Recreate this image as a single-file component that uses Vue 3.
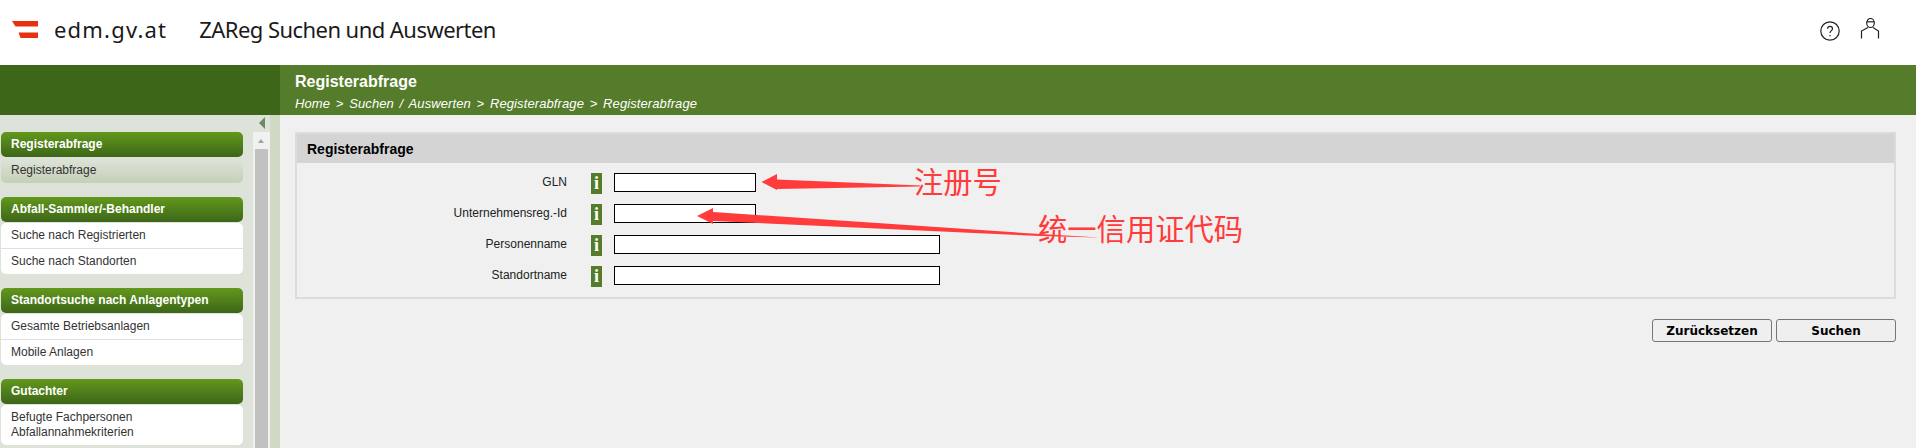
<script setup>
const menu = [
  { title: 'Registerabfrage', active: true, items: ['Registerabfrage'] },
  { title: 'Abfall-Sammler/-Behandler', items: ['Suche nach Registrierten', 'Suche nach Standorten'] },
  { title: 'Standortsuche nach Anlagentypen', items: ['Gesamte Betriebsanlagen', 'Mobile Anlagen'] },
  { title: 'Gutachter', items: ['Befugte Fachpersonen Abfallannahmekriterien'] }
]

const fields = [
  { label: 'GLN', short: true },
  { label: 'Unternehmensreg.-Id', short: true },
  { label: 'Personenname' },
  { label: 'Standortname' }
]
</script>

<template>
  <div class="page">
    <header class="top">
      <svg class="flag" width="26" height="17" viewBox="0 0 26 17">
        <path d="M0 0H26V5.500H3.500Z M6.500 11.500H26V17H8.500Z" fill="#e6320f" />
      </svg>
      <span class="brand">edm.gv.at</span>
      <span class="app-title">ZAReg Suchen und Auswerten</span>
      <div class="top-icons">
        <svg class="icon-help" width="20" height="20" viewBox="0 0 20 20" fill="none" stroke="#222" stroke-width="1.200">
          <circle cx="10" cy="10" r="9.200" />
          <path d="M7.500 7.800C7.500 6.200 8.700 5.300 10 5.300S12.500 6.200 12.500 7.700C12.500 9.500 10 9.800 10 12" />
          <path d="M10 14V15.200" />
        </svg>
        <svg width="20" height="21" viewBox="0 0 20 21" fill="none" stroke="#222" stroke-width="1.200">
          <ellipse cx="10.500" cy="5" rx="3.800" ry="4.500" />
          <path d="M6.800 3.800H14.200" />
          <path d="M8 9.500L1.500 13V20.500 M13 9.500L18.500 13V20.500" />
        </svg>
      </div>
    </header>

    <div class="green-bar">
      <div class="green-left"></div>
      <div class="green-right">
        <div class="page-title">Registerabfrage</div>
        <div class="crumbs">Home &gt; Suchen / Auswerten &gt; Registerabfrage &gt; Registerabfrage</div>
      </div>
    </div>

    <div class="body">
      <aside class="side">
        <nav class="menu">
          <section v-for="group in menu" :key="group.title" class="group">
            <div class="group-head">{{ group.title }}</div>
            <ul class="group-items" :class="{ 'is-active': group.active }">
              <li v-for="item in group.items" :key="item">{{ item }}</li>
            </ul>
          </section>
        </nav>
        <div class="scroll">
          <span class="scroll-up"></span>
          <div class="scroll-thumb"></div>
        </div>
        <div class="strip"></div>
        <span class="collapse"></span>
      </aside>

      <main class="content">
        <section class="panel">
          <h2 class="panel-head">Registerabfrage</h2>
          <div class="rows">
            <div v-for="field in fields" :key="field.label" class="row">
              <label class="row-label">{{ field.label }}</label>
              <span class="info">i</span>
              <input class="row-input" :class="{ short: field.short }" type="text" />
            </div>
          </div>
        </section>
        <div class="actions">
          <button class="btn">Zurücksetzen</button>
          <button class="btn">Suchen</button>
        </div>
      </main>
    </div>

    <!-- annotations pasted over the screenshot -->
    <svg class="arrows" width="1916" height="448" viewBox="0 0 1916 448">
      <path d="M761.500 182L777 174V179.500L920 185.500V186.500L777 189V190Z" fill="#ff3b3b" />
      <path d="M697 216L713 208V212L1040 234L1100 237.500L1040 236L713 221V224Z" fill="#ff3b3b" />
    </svg>
    <span class="note note-a">注册号</span>
    <span class="note note-b">统一信用证代码</span>
  </div>
</template>

<style scoped>
.page {
  position: relative;
  width: 1916px;
  height: 448px;
  overflow: hidden;
  background: #f0f0f0;
  font-family: "Liberation Sans", Arial, sans-serif;
}

/* 顶部 */
.top {
  display: flex;
  align-items: center;
  box-sizing: border-box;
  height: 65px;
  padding: 0 0 6px 12px;
  background: #fff;
  font-family: "Noto Sans", sans-serif;
  color: #1a1a1a;
}
.brand { margin: 0 0 2px 16px; font-size: 22px; letter-spacing: 1.2px; }
.app-title { margin: 0 0 2px 32px; font-size: 22px; letter-spacing: -0.55px; }
.top-icons {
  display: flex;
  align-items: flex-start;
  gap: 20px;
  align-self: flex-start;
  margin: 18px 36px 0 auto;
}
.icon-help { margin-top: 3px; }

.green-bar { display: flex; height: 50px; }
.green-left { width: 280px; background: #3d6619; }
.green-right {
  flex: 1;
  padding: 7px 0 0 15px;
  background: #557c2a;
  color: #fff;
}
.page-title { font-size: 16px; font-weight: bold; line-height: 20px; }
.crumbs {
  margin-top: 4px;
  font-size: 13px;
  font-style: italic;
  line-height: 16px;
  letter-spacing: 0.1px;
  word-spacing: 2px;
}

.body { display: flex; height: 333px; }

/* 左侧菜单 */
.side {
  position: relative;
  display: flex;
  width: 280px;
  flex: none;
  background: #dde3d9;
}
.menu { width: 242px; margin: 17px 0 0 1px; }
.group { margin-bottom: 14px; }
.group-head {
  height: 25px;
  padding-left: 10px;
  border-radius: 5px;
  background: linear-gradient(#62981c, #3d6619);
  color: #fff;
  font-size: 12px;
  font-weight: bold;
  line-height: 24px;
}
.group-items {
  margin: 1px 0 0;
  padding: 0;
  list-style: none;
  border-radius: 5px;
  background: #fff;
  color: #333;
  font-size: 12px;
}
.group-items li {
  padding: 5px 10px;
  line-height: 15px;
  border-top: 1px solid #dde3d9;
}
.group-items li:first-child { border-top: 0; }
.group-items.is-active {
  margin-top: 2px;
  background: linear-gradient(#dde3d9, #c4d0b8);
}
.group-items.is-active li { padding: 4px 10px 5px; }
.scroll {
  position: relative;
  width: 17px;
  margin: 17px 0 0 10px;
  background: #f1f1f1;
}
.scroll-up {
  position: absolute;
  top: 7px;
  left: 5px;
  border: 3.500px solid transparent;
  border-top: 0;
  border-bottom: 4px solid #a3a3a3;
}
.scroll-thumb {
  position: absolute;
  top: 17px;
  bottom: 0;
  left: 2px;
  width: 13px;
  background: #c1c1c1;
}
.strip { width: 10px; background: #cfd9c4; }
.collapse {
  position: absolute;
  top: 2px;
  left: 259px;
  border: 6px solid transparent;
  border-left: 0;
  border-right: 6px solid #6d8a62;
}

/* 内容区 */
.content { flex: 1; padding: 17px 20px 0 15px; }
.panel {
  height: 167px;
  box-sizing: border-box;
  border: 2px solid #dcdcdc;
}
.panel-head {
  height: 29px;
  margin: 0;
  padding-left: 10px;
  background: #d4d4d4;
  color: #000;
  font-size: 14px;
  font-weight: bold;
  line-height: 30px;
}
.rows { padding-top: 10px; }
.row { display: flex; align-items: flex-start; height: 31px; }
.row-label {
  width: 270px;
  color: #222;
  font-size: 12px;
  line-height: 18px;
  text-align: right;
}
.info {
  width: 11px;
  height: 21px;
  margin-left: 24px;
  background: #557c2a;
  color: #fff;
  font-family: "Liberation Serif", serif;
  font-size: 18px;
  font-weight: bold;
  line-height: 21px;
  text-align: center;
}
.row-input {
  width: 326px;
  height: 19px;
  box-sizing: border-box;
  margin: 0 0 0 12px;
  padding: 0;
  border: 1px solid #000;
  background: #fff;
}
.row-input.short { width: 142px; }

.actions {
  display: flex;
  justify-content: flex-end;
  gap: 4px;
  margin-top: 20px;
}
.btn {
  width: 120px;
  height: 23px;
  padding: 0;
  border: 1px solid #767676;
  border-radius: 3px;
  background: #efefef;
  color: #000;
  font-family: "DejaVu Sans", sans-serif;
  font-size: 12px;
  font-weight: bold;
}

/* 标注 */
.arrows { position: absolute; top: 0; left: 0; pointer-events: none; }
.note {
  position: absolute;
  color: #ff3b3b;
  font-family: "Noto Sans CJK SC", sans-serif;
  font-size: 29.300px;
  line-height: 34px;
  white-space: nowrap;
}
.note-a { top: 163px; left: 914px; }
.note-b { top: 210px; left: 1038px; }
</style>
